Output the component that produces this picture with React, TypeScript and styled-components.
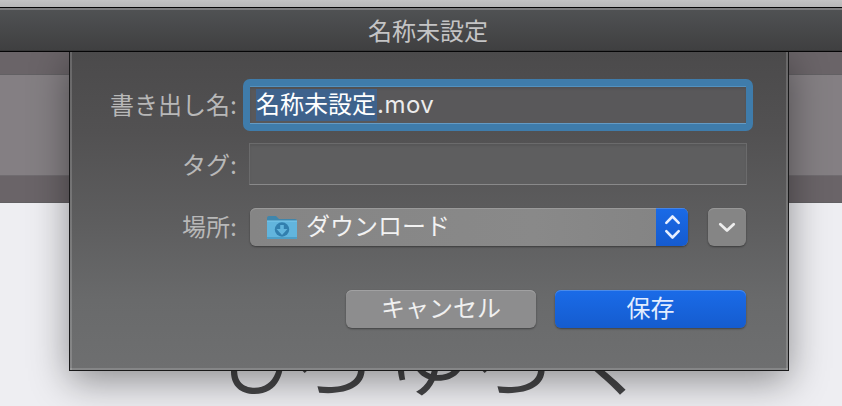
import React from 'react';
import styled, { createGlobalStyle } from 'styled-components';

const Global = createGlobalStyle`
  * { box-sizing: border-box; }
  html, body { margin: 0; width: 842px; height: 406px; overflow: hidden; }
  body { font-family: Inter, "Noto Sans CJK JP", sans-serif; font-size: 24px; }
`;

const Window = styled.div`
  position: relative;
  display: flex;
  flex-direction: column;
  width: 842px;
  height: 406px;
  overflow: hidden;
  background: #eeeef2;
`;
const MenuStrip = styled.div`
  flex: none;
  height: 7px;
  background: linear-gradient(#c3c3c3, #b7b7b7);
`;
const TitleBar = styled.header`
  position: relative;
  z-index: 2;
  flex: none;
  display: flex;
  justify-content: center;
  height: 45px;
  padding-left: 14px;
  border-top: 1px solid #060606;
  border-bottom: 1px solid #050506;
  box-shadow: inset 0 2px #7c7c7d, inset 0 -1px #373738;
  background: linear-gradient(#505254, #3f3f40);
  color: #c4c4c5;
  line-height: 47px;
`;
const Band = styled.div<{ $height: number; $light?: boolean }>`
  flex: none;
  height: ${p => p.$height}px;
  background: ${p => (p.$light ? '#847f83' : '#6a6468')};
  border-bottom: 1px solid ${p => (p.$light ? '#706c70' : '#626063')};
`;
const Paper = styled.main`
  flex: 1;
  min-height: 0;
  padding: 98px 0 0 217px;
  overflow: hidden;
  color: #464648;
  font: 350 88px/100px "Noto Sans CJK JP", sans-serif;
  white-space: nowrap;
`;
const Kana = styled.span<{ $kern: number }>`
  letter-spacing: ${p => p.$kern}px;
`;
const Sheet = styled.section`
  position: absolute;
  z-index: 1;
  left: 69px;
  top: 52px;
  width: 720px;
  height: 319px;
  padding: 27px 35px 0 38px;
  border: 1px solid #19191a;
  border-top: 0;
  box-shadow: inset 2px 0 #ffffff2a, inset -2px 0 #ffffff2a, inset 0 -2px #ffffff2a,
    0 10px 36px #00000068;
  background: linear-gradient(#4b4a4b 0%, #525152 25%, #5e5e5f 55%, #696a6b 78%, #6e6f70 100%);
`;
const FormRow = styled.div<{ $height: number; $gap: number; $inset?: number }>`
  display: flex;
  align-items: center;
  height: ${p => p.$height}px;
  margin-bottom: ${p => p.$gap}px;
  padding-right: ${p => p.$inset ?? 0}px;
`;
const Label = styled.label<{ $space: number; $drop?: number }>`
  flex: none;
  width: 129px;
  margin-right: ${p => p.$space}px;
  padding-top: ${p => p.$drop ?? 0}px;
  text-align: right;
  color: #b8b8b8;
  line-height: 36px;
  white-space: nowrap;
`;
const NameField = styled.div`
  flex: 1;
  height: 52px;
  border: 7px solid #3f7cab;
  border-radius: 7px;
  display: flex;
  align-items: center;
  padding-left: 6px;
  background: #59585a;
  box-shadow: inset 0 1px #5391bf, inset 0 -1px #649bc5, inset 0 3px 2px #00000018;
  color: #ececec;
`;
const Selected = styled.span`
  height: 32px;
  width: 121px;
  line-height: 32px;
  background: #3e628c;
  color: white;
`;
const Extension = styled.span`
  line-height: 34px;
  letter-spacing: .5px;
`;
const TagField = styled.div`
  flex: 1;
  height: 42px;
  border: 1px solid #6b6b6c;
  border-bottom-color: #89898a;
  background: #5e5e5f;
  box-shadow: inset 0 2px 2px #00000014;
`;
const Popup = styled.div`
  display: flex;
  align-items: center;
  width: 438px;
  height: 38px;
  overflow: hidden;
  padding-left: 16px;
  border-radius: 6px;
  background: linear-gradient(90deg, #858585, #898989 65%, #838383);
  box-shadow: inset 0 1px #9a9a9a, 0 1px 2px #00000066;
  color: #f2f2f2;
  line-height: 36px;
`;
const PopupText = styled.span`
  margin-left: 8px;
  flex: 1;
`;
const Stepper = styled.span`
  display: flex;
  width: 32px;
  height: 38px;
  background: linear-gradient(#1a6ae7, #155bcf);
  box-shadow: inset 0 1px #4685e6;
`;
const Disclosure = styled.button`
  display: flex;
  width: 38px;
  height: 38px;
  margin-left: 20px;
  padding: 0;
  border: 0;
  border-radius: 6px;
  background: #858585;
  box-shadow: inset 0 1px #989898, 0 1px 2px #00000066;
`;
const Actions = styled.footer`
  display: flex;
  justify-content: flex-end;
  gap: 19px;
  padding-right: 7px;
`;
const Button = styled.button<{ $primary?: boolean }>`
  width: ${p => (p.$primary ? 191 : 190)}px;
  height: 38px;
  padding: 0;
  border: 0;
  border-radius: 6px;
  font: inherit;
  line-height: 36px;
  color: ${p => (p.$primary ? '#e2edff' : '#f0f0f0')};
  background: ${p => (p.$primary ? 'linear-gradient(#1a6be8, #155ccf)' : '#8d8d8e')};
  box-shadow: inset 0 1px ${p => (p.$primary ? '#4b8bea' : '#a1a1a2')}, 0 1px 2px #00000066;
`;

const FolderIcon = () => (
  <svg width="32" height="28" viewBox="0 -2 32 28">
    <path d="M1 3q0-2 2-2h7l3 3h16q2 0 2 2v18H1z" fill="#3f86ac" />
    <path d="M1 6h30v17q0 1-1 1H2q-1 0-1-1z" fill="#62b5dd" />
    <path d="M1 6h30" stroke="#7fcbed" />
    <path d="M1 22h30v1q0 1-1 1H2q-1 0-1-1z" fill="#4d9fc8" />
    <circle cx="16" cy="14.5" r="7.2" fill="#327fae" />
    <path d="M14.2 10h3.6v4h3.7L16 20l-5.5-6h3.7z" fill="#62b5dd" />
  </svg>
);

export default function App() {
  return (
    <>
      <Global />
      <Window>
        <MenuStrip />
        <TitleBar>名称未設定</TitleBar>
        <Band $height={23} />
        <Band $height={101} $light />
        <Band $height={27} />
        <Paper>
          <Kana $kern={-15}>ひ</Kana>
          <Kana $kern={7}>ろ</Kana>
          <Kana $kern={-3}>ゆ</Kana>
          <Kana $kern={4}>ろ</Kana>
          <Kana $kern={0}>く</Kana>
        </Paper>
        <Sheet>
          <FormRow $height={52} $gap={12}>
            <Label $space={6} $drop={1}>書き出し名:</Label>
            <NameField>
              <Selected>名称未設定</Selected>
              <Extension>.mov</Extension>
            </NameField>
          </FormRow>
          <FormRow $height={42} $gap={23} $inset={6}>
            <Label $space={12} $drop={3}>タグ:</Label>
            <TagField />
          </FormRow>
          <FormRow $height={38} $gap={44}>
            <Label $space={13} $drop={1}>場所:</Label>
            <Popup>
              <FolderIcon />
              <PopupText>ダウンロード</PopupText>
              <Stepper>
                <svg width="32" height="38" fill="none" stroke="#e7efff" strokeWidth="2.6" strokeLinecap="round" strokeLinejoin="round">
                  <path d="M10.3 14.8l6.2-6.3 6.2 6.3M10.3 23.2l6.2 6.3 6.2-6.3" />
                </svg>
              </Stepper>
            </Popup>
            <Disclosure aria-label="詳細">
              <svg width="38" height="38" fill="none" stroke="#ededed" strokeWidth="2.8" strokeLinecap="round" strokeLinejoin="round">
                <path d="M12.3 16.3l6.7 6.2 6.7-6.2" />
              </svg>
            </Disclosure>
          </FormRow>
          <Actions>
            <Button>キャンセル</Button>
            <Button $primary>保存</Button>
          </Actions>
        </Sheet>
      </Window>
    </>
  );
}
